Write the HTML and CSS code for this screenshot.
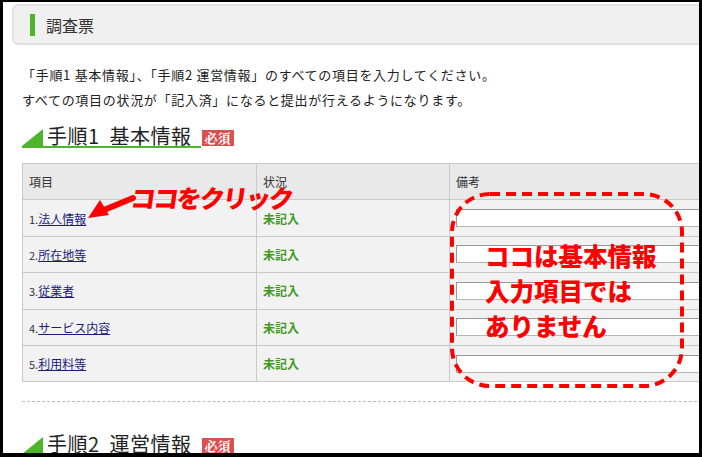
FILE: index.html
```html
<!DOCTYPE html>
<html lang="ja">
<head>
<meta charset="utf-8">
<link rel="stylesheet" href="styles.css">
</head>
<body>
<div class="frame">
  <div class="page-head"><span class="bar"></span><h1>調査票</h1></div>
  <div class="content">
    <p class="lead">「手順1 基本情報」、「手順2 運営情報」のすべての項目を入力してください。<br>すべての項目の状況が「記入済」になると提出が行えるようになります。</p>
    <div class="step"><h2>手順1&nbsp; 基本情報</h2><span class="badge">必須</span></div>
    <table class="grid">
      <colgroup><col class="c1"><col class="c2"><col class="c3"></colgroup>
      <tr class="hd"><th>項目</th><th>状況</th><th>備考</th></tr>
      <tr><td><span class="num">1.</span><a href="#">法人情報</a></td><td class="st">未記入</td><td><span class="field"></span></td></tr>
      <tr><td><span class="num">2.</span><a href="#">所在地等</a></td><td class="st">未記入</td><td><span class="field"></span></td></tr>
      <tr><td><span class="num">3.</span><a href="#">従業者</a></td><td class="st">未記入</td><td><span class="field"></span></td></tr>
      <tr><td><span class="num">4.</span><a href="#">サービス内容</a></td><td class="st">未記入</td><td><span class="field"></span></td></tr>
      <tr><td><span class="num">5.</span><a href="#">利用料等</a></td><td class="st">未記入</td><td><span class="field"></span></td></tr>
    </table>
    <hr class="sep">
    <div class="step step2"><h2>手順2&nbsp; 運営情報</h2><span class="badge">必須</span></div>
  </div>

  <svg class="arrow" width="50" height="32" viewBox="0 0 50 32">
    <path d="M46 6 L17 18" stroke="#ff0000" stroke-width="6" stroke-linecap="round" fill="none"/>
    <path d="M1 26 L13 8 L22 23 Z" fill="#ff0000"/>
  </svg>
  <div class="note1">ココをクリック</div>
  <svg class="ring" width="240" height="200" viewBox="0 0 240 200">
    <rect x="3" y="3" width="230" height="192" rx="38" ry="38" fill="none" stroke="#ff0000" stroke-width="4" stroke-dasharray="10 6"/>
  </svg>
  <div class="note2">ココは基本情報<br>入力項目では<br>ありません</div>
</div>
</body>
</html>
```
FILE: styles.css
```css
html, body { margin: 0; padding: 0; background: #000; }
body { font-family: "Noto Sans CJK JP", "Noto Sans", sans-serif; color: #333; }
.frame {
  position: relative;
  width: 702px; height: 457px;
  box-sizing: border-box;
  border-style: solid; border-color: #000;
  border-width: 2px 3px 4px 3px;
  background: #fff;
  overflow: hidden;
}
.page-head {
  margin: 2px -30px 0 9px;
  height: 41px;
  box-sizing: border-box;
  border: 2px solid #e2e2e2;
  border-radius: 6px;
  background: #f0f0f0;
  display: flex; align-items: center;
}
.bar { width: 5px; height: 22px; background: #4cb52b; margin-left: 16px; }
.page-head h1 { margin: 0 0 0 11px; font-size: 16px; font-weight: normal; color: #333; line-height: 1; }
.content { padding-left: 19px; width: 760px; }
.lead { margin: 17px 0 0; font-size: 13px; letter-spacing: 0.7px; line-height: 25px; color: #222; }
.step { display: flex; align-items: flex-end; margin-top: 13px; height: 23px; }
.step h2 {
  position: relative;
  margin: 0; padding: 0 9px 0 25px;
  font-size: 20px; font-weight: normal; line-height: 21px; color: #222;
  letter-spacing: 0.5px;
  border-bottom: 2px solid #4cb52b;
}
.step h2::before {
  content: ""; position: absolute; left: 0; bottom: 0;
  border-style: solid; border-width: 0 0 17px 21px;
  border-color: transparent transparent #4cb52b transparent;
}
.badge {
  margin: 0 0 2px 1px;
  background: #d9504f; color: #fff;
  font-family: "Noto Serif CJK JP", "Noto Sans CJK JP", serif;
  font-size: 13px; font-weight: bold; line-height: 16px;
  padding: 0 3px;
}
.grid {
  margin-top: 15px;
  border-collapse: collapse;
  width: 760px;
  background: #f2f2f2;
  font-size: 12px;
}
.c1 { width: 234px; } .c2 { width: 193px; }
.grid tr { height: 36.4px; }
.grid th, .grid td {
  border: 1px solid #c9c9c9;
  padding: 0 6px;
  text-align: left;
}
.grid th { font-weight: normal; background: #e9e9e9; color: #333; font-size: 12px; }
.num { font-size: 11px; color: #333; }
.grid a { color: #1a1a80; text-decoration: underline; }
.st { color: #3d9b1c; font-weight: bold; }
.field {
  display: block; height: 18px; box-sizing: border-box;
  border: 1px solid #b5b5b5; border-top-color: #999; border-left-color: #999;
  background: #fff;
}
.sep { margin: 19px 0 0; border: 0; border-top: 1px dashed #b8b8b8; }
.step2 { margin-top: 31px; }
.arrow { position: absolute; left: 84px; top: 190px; }
.note1 {
  position: absolute; left: 128px; top: 178px;
  font-size: 25px; font-weight: 900; color: #ff0000;
  letter-spacing: -2px; transform: skewX(-8deg); line-height: 34px;
}
.ring { position: absolute; left: 446px; top: 189px; }
.note2 {
  position: absolute; left: 482px; top: 236px;
  font-size: 24.5px; font-weight: 900; color: #ff0000;
  line-height: 35px; letter-spacing: 0;
}
```
